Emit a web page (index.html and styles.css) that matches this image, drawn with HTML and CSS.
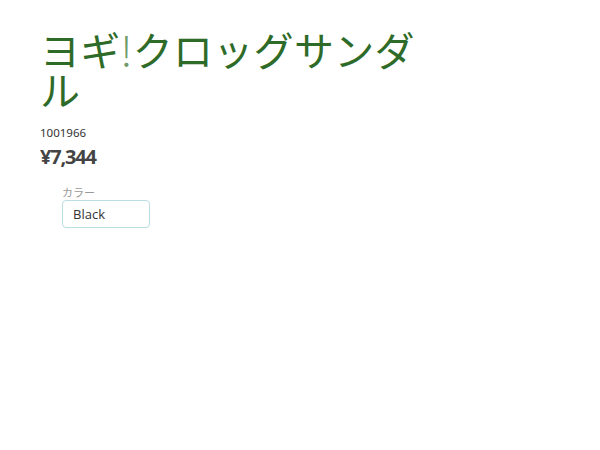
FILE: index.html
```html
<!DOCTYPE html>
<html lang="ja">
<head>
<meta charset="utf-8">
<link rel="stylesheet" href="styles.css">
</head>
<body>
<div class="product">
  <h1 class="title">ヨギ<span class="bang">!</span>クロッグサンダル</h1>
  <div class="code">1001966</div>
  <div class="price">¥7,344</div>
  <div class="option">
    <div class="label">カラー</div>
    <div class="select">Black</div>
  </div>
</div>
</body>
</html>
```

FILE: styles.css
```css
html, body {
  margin: 0;
  padding: 0;
  background: #fff;
}
body {
  font-family: "Open Sans", "Noto Sans CJK JP", sans-serif;
}
.product {
  padding: 29px 0 0 40px;
  width: 400px;
}
.title {
  margin: 0;
  font-family: "Noto Sans CJK JP", sans-serif;
  font-weight: 400;
  font-size: 40px;
  line-height: 40px;
  letter-spacing: 0.3px;
  color: #2f6b28;
}
.title .bang {
  font-weight: 300;
  color: #6f9a69;
}
.code {
  margin-top: 16px;
  font-family: "Noto Sans", sans-serif;
  font-size: 11.5px;
  line-height: 16px;
  color: #333;
}
.price {
  margin-top: 4px;
  font-family: "Open Sans", sans-serif;
  font-weight: 700;
  font-size: 20px;
  line-height: 24px;
  letter-spacing: -1.2px;
  color: #444;
}
.option {
  margin: 16px 0 0 22px;
}
.label {
  font-family: "Noto Sans CJK JP", sans-serif;
  font-size: 11px;
  line-height: 14px;
  color: #999;
}
.select {
  box-sizing: border-box;
  width: 88px;
  height: 28px;
  margin-top: 1px;
  padding: 0 10px;
  border: 1px solid #b9dde1;
  border-radius: 4px;
  font-size: 13px;
  line-height: 26px;
  color: #333;
}
```
